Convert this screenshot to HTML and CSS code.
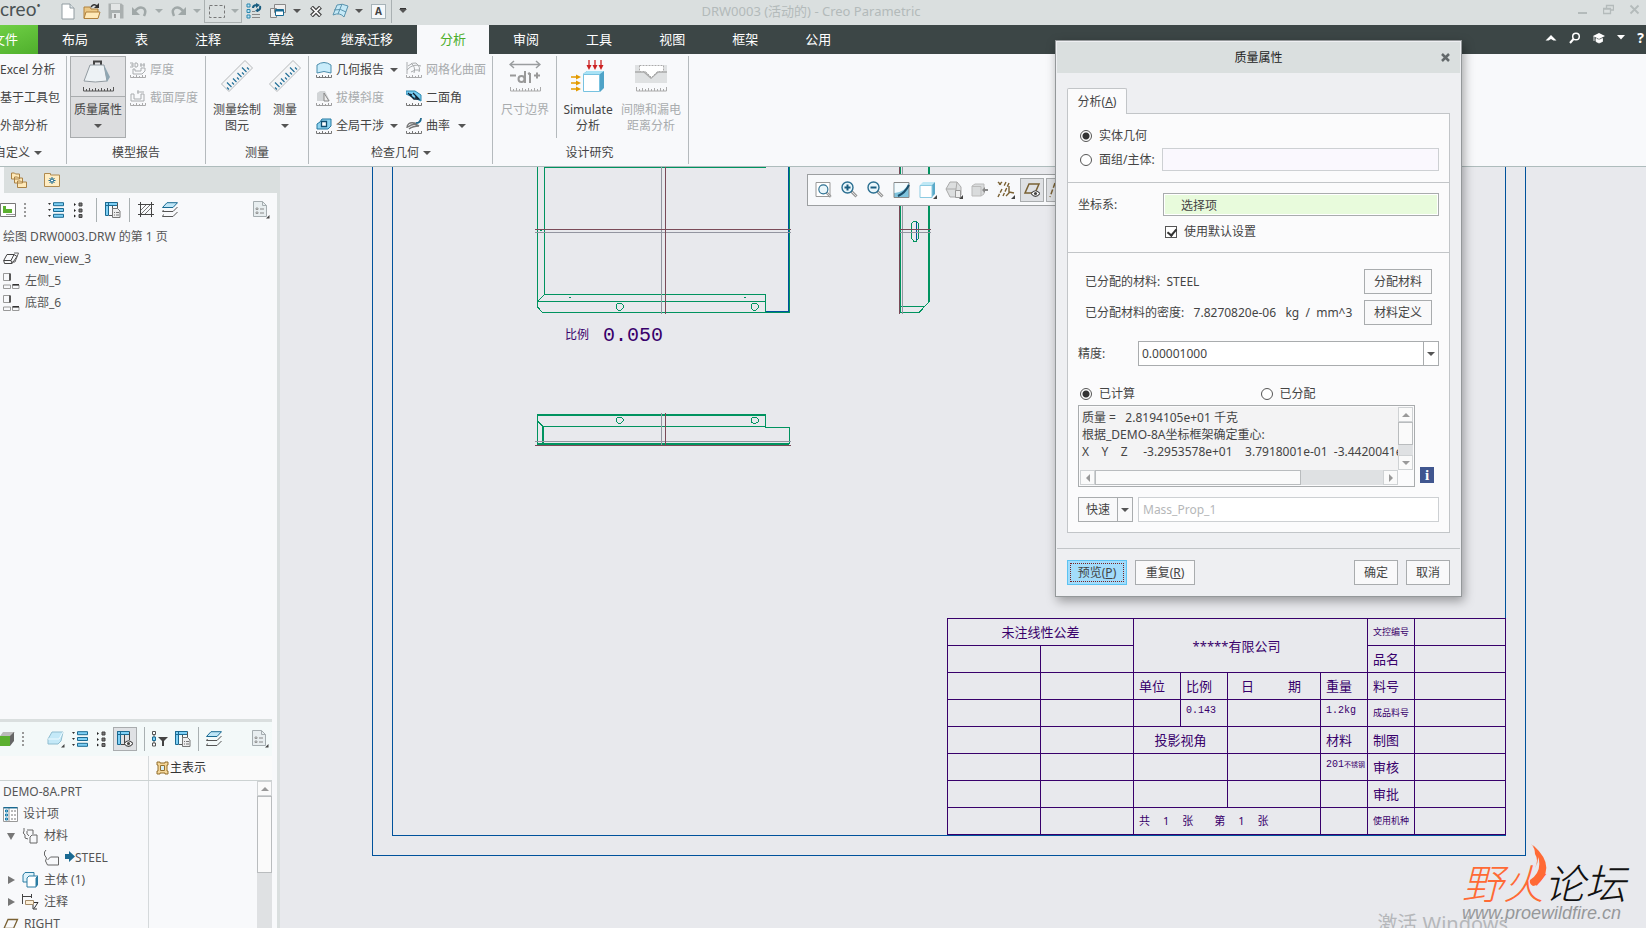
FILE: index.html
```html
<!DOCTYPE html>
<html lang="zh-CN">
<head>
  <meta charset="UTF-8" />
  <meta name="viewport" content="width=device-width, initial-scale=1.0" />
  <title>DRW0003 (活动的) - Creo Parametric</title>
  <link rel="stylesheet" href="styles.css">
</head>
<body>

<!-- shared icons -->
<svg class="defs" width="0" height="0" aria-hidden="true">
  <symbol id="ticks" viewBox="0 0 16 4"><path d="M.5 1v2.500h15V1M3.500 2v1M6.500 1v2M9.500 2v1M12.500 1v2" fill="none" stroke="#777" /></symbol>
  <symbol id="i-rows" viewBox="0 0 16 16"><path d="M5.500.7h10v3h-10zM5.500 6.500h10v3h-10zM5.500 12.300h10v3h-10z" fill="#7fd0f5" stroke="#1a6a92" /><path d="M0 1h3L1.500 3zM0 7h3L1.500 9zM0 13h3l-1.500 2z" fill="#333" /></symbol>
  <symbol id="i-nodes" viewBox="0 0 9 16"><path d="M5 1h3v3H5zM5 7h3v3H5zM5 12.500h3v3H5z" fill="#777" stroke="#444" /><path d="M0 1l2 1.500L0 4zM0 7l2 1.500L0 10zM0 12.500l2 1.500-2 1.500z" fill="#222" /></symbol>
  <symbol id="i-cols" viewBox="0 0 16 16"><path d="M.5.500h3v13h-3zM.5.500h12v3H.5z" fill="#7fd0f5" stroke="#1a6a92" /><path d="M7.500 4v8M12.500 1v6M4 13.500h3" stroke="#555" fill="none" /><path d="M7.500 6.500h5l2.500 2.500v6.500H7.500z" fill="#eee" stroke="#777" /><path d="M9 10.500h1m1 0h3M9 13h1m1 0h3" stroke="#777" /></symbol>
  <symbol id="i-layers" viewBox="0 0 16 16"><path d="M5 .7h10.500L11 5.500H.5z" fill="#bfe6f7" stroke="#1a6a92" /><path d="M1.500 8L.5 9.500H11L15.500 5M1.500 12.500L.5 14.500H11l4.500-4.500" fill="none" stroke="#555" /></symbol>
  <symbol id="i-doc" viewBox="0 0 18 18"><path d="M1.500.5h9l4 4v11h-13z" fill="#e8eef0" stroke="#a5adb0" /><path d="M10.500.5v4h4" fill="none" stroke="#a5adb0" /><path d="M4 7h2v1.500H4zM4 11h2v1.500H4z" fill="none" stroke="#888" stroke-width=".8" /><path d="M8 8h4M8 12h4" stroke="#888" /><path d="M17.500 14v3.500H14z" fill="#444" /></symbol>
  <symbol id="i-view" viewBox="0 0 17 16"><path d="M.5.500h6.500v7H.5zM.5 12h7v3.500h-7zM9.500 12h6.500v3.500H9.500z" fill="none" stroke="#999" /><path d="M7 .5v7M9.500 11.800H16" stroke="#333" stroke-width="1.500" /></symbol>
  <symbol id="i-ruler" viewBox="0 0 32 32"><path d="M24 .5L31.500 8 8 31.500.5 24z" fill="#f4f5f6" stroke="#b5b8ba" /><path d="M8 29.500l-2-2M10.500 27L6 22.500M13 24.500l-2-2M15.500 22L12 18.500M18 19.500l-2-2M20.500 17l-4-4M23 14.500l-2-2M25.500 12L21 7.500M28 9.500l-2-2" stroke="#247099" stroke-width="1.200" /></symbol>
  <symbol id="i-eye" viewBox="0 0 8 6"><path d="M0 3q4-5 8 0-4 5-8 0z" fill="#fff" stroke="#444" /><circle cx="4" cy="3" r="1.400" fill="#444" /></symbol>
  <symbol id="i-lens" viewBox="0 0 17 17"><path d="M10.500 10.500l5 5" stroke="#999" stroke-width="3" /><path d="M10.500 10.500l4.500 4.500" stroke="#ddd" /><circle cx="6.500" cy="6.500" r="5.500" fill="#eaf6fb" stroke="#2b6f91" stroke-width="1.400" /></symbol>
</svg>

<header class="titlebar">
  <div class="quick">
    <span class="brand">creo<sup>•</sup></span>
    <button aria-label="新建"><svg width="14" height="17" viewBox="0 0 14 17"><path d="M1 1h8l4 4v11H1z" fill="#fff" stroke="#909ba0" /><path d="M9 1v4h4" fill="#dde5e8" stroke="#909ba0" /></svg></button>
    <button aria-label="打开"><svg width="18" height="17" viewBox="0 0 18 17"><path d="M1 4h6l1 2h7v9H1z" fill="#eac785" stroke="#b0813d" /><path d="M3 9h14l-2 6.500H1z" fill="#ffe9b8" stroke="#b0813d" /><path d="M8 4q3-4 6-1" fill="none" stroke="#333" stroke-width="1.500" /><path d="M16 0v5h-5z" fill="#333" /></svg></button>
    <button aria-label="保存"><svg width="16" height="16" viewBox="0 0 16 16"><path d="M.5.500h13l2 2v13H.5z" fill="#aab0b0" /><path d="M3 1h9v6H3z" fill="#e3e6e6" /><path d="M4 10h8v6H4z" fill="#e3e6e6" /><path d="M6 11h2v4H6z" fill="#999" /></svg></button>
    <button aria-label="撤消"><svg width="16" height="14" viewBox="0 0 16 14"><path d="M3 7q4-5 8-3t1 8" fill="none" stroke="#a0a8a8" stroke-width="2.500" /><path d="M0 3v8h8z" fill="#a0a8a8" /></svg></button>
    <i class="caret pale"></i>
    <button aria-label="重做"><svg width="16" height="14" viewBox="0 0 16 14"><path d="M13 7q-4-5-8-3T4 12" fill="none" stroke="#a0a8a8" stroke-width="2.500" /><path d="M16 3v8H8z" fill="#a0a8a8" /></svg></button>
    <i class="caret pale"></i>
    <span class="selectbox">
      <button aria-label="选择"><svg width="16" height="13" viewBox="0 0 16 13"><path d="M.5.500h15v12H.5z" fill="none" stroke="#777" stroke-dasharray="3 2" /></svg></button>
      <i class="caret pale"></i>
    </span>
    <button aria-label="重新生成"><svg width="16" height="16" viewBox="0 0 16 16"><path d="M1 1h3v3H1zM1 6.500h3v3H1zM1 12h3v3H1z" fill="#bde5f6" stroke="#2b86ad" /><path d="M6 8.500h3M6 11.500h8M6 14.500h8" stroke="#888" /><path d="M7 5q0-3 4-3M14 3q1 4-3 5" fill="none" stroke="#1a5d80" stroke-width="2" /><path d="M10 0l4 2-4 3zM12 5v4l-3-1z" fill="#1a5d80" /></svg></button>
    <button aria-label="窗口"><svg width="16" height="15" viewBox="0 0 16 15"><path d="M4.500.5h11v8h-11zM.5 4.500h6v9h-6z" fill="#eee" stroke="#888" /><path d="M5.500 5.500h8v6h-8z" fill="#fff" stroke="#1a6a92" /><path d="M5.500 6.500h8" stroke="#1a6a92" stroke-width="2" /></svg></button>
    <i class="caret"></i>
    <button aria-label="关闭窗口"><svg width="12" height="11" viewBox="0 0 12 11"><path d="M1.500 1l9 9M10.500 1l-9 9" stroke="#444" stroke-width="4" /><path d="M2 1.500l8 8M10 1.500l-8 8" stroke="#fff" stroke-width="1.700" /></svg></button>
    <button aria-label="样式"><svg width="17" height="16" viewBox="0 0 17 16"><path d="M5 2q5-2 11 1l-4 11Q8 9 1 12z" fill="#c5e9f7" stroke="#5a93ad" /><path d="M10 1L6 11M2 7q7-2 12 2" fill="none" stroke="#5a93ad" /></svg></button>
    <i class="caret"></i>
    <button class="abox" aria-label="文本">A</button>
    <i class="bar"></i>
    <i class="caret topped"></i>
  </div>
  <div class="apptitle">DRW0003 (活动的) - Creo Parametric</div>
  <div class="winbtns">
    <button aria-label="最小化"><svg width="11" height="11" viewBox="0 0 11 11"><path d="M1 9h9" stroke="#b4bbbb" stroke-width="2" /></svg></button>
    <button aria-label="还原"><svg width="11" height="11" viewBox="0 0 11 11"><path d="M3.500 4V1.500h7V6H8M.5 4.500h7v5h-7zM.5 5h7" fill="none" stroke="#b4bbbb" stroke-width="1.300" /></svg></button>
    <button aria-label="关闭"><svg width="11" height="11" viewBox="0 0 11 11"><path d="M1.500 1.500l8 8M9.500 1.500l-8 8" stroke="#b4bbbb" stroke-width="1.800" /></svg></button>
  </div>
</header>

<nav class="menu">
  <a class="file" href="#">文件</a>
  <a href="#">布局</a>
  <a href="#">表</a>
  <a href="#">注释</a>
  <a href="#">草绘</a>
  <a href="#">继承迁移</a>
  <a class="active" href="#">分析</a>
  <a href="#">审阅</a>
  <a href="#">工具</a>
  <a href="#">视图</a>
  <a href="#">框架</a>
  <a href="#">公用</a>
  <div class="menutools">
    <svg width="12" height="8" viewBox="0 0 12 8"><path d="M6 1l5.500 5.500h-3L6 5 3.500 6.500h-3z" fill="#fff" /></svg>
    <svg width="12" height="12" viewBox="0 0 12 12"><circle cx="7" cy="4.500" r="3.300" fill="none" stroke="#fff" stroke-width="1.500" /><path d="M4.500 7L1 11" stroke="#fff" stroke-width="2" /></svg>
    <svg width="12" height="12" viewBox="0 0 12 12"><path d="M6 1l6 3-6 3-6-3z" fill="#fff" /><path d="M3 6.500l3 1.500 3.500-1.500v3L6 11 3 9.500zM1 4v5" fill="#fff" stroke="#fff" stroke-width=".8" /></svg>
    <svg width="8" height="5" viewBox="0 0 8 5"><path d="M0 0h8L4 4.500z" fill="#fff" /></svg>
    <b>?</b>
  </div>
</nav>

<section class="ribbon">
  <div class="group custom">
    <div class="body stack">
      <button class="small">Excel 分析</button>
      <button class="small">基于工具包</button>
      <button class="small">外部分析</button>
    </div>
    <div class="name">自定义<i class="caret"></i></div>
  </div>

  <div class="group model">
    <div class="body">
      <button class="big pressed">
        <svg width="32" height="32" viewBox="0 0 32 32"><path d="M12 5V1.500h7V5" fill="none" stroke="#444" stroke-width="2" /><path d="M8 5h14l3 16q-12 2-23 0z" fill="#edf2f5" stroke="#929ba1" /><path d="M22 5l6 12-3 5z" fill="#8fa7b3" /><path d="M1.500 27v4h30v-4M4.500 29v2M7.500 28v3M10.500 29v2M13.500 28v3M16.500 29v2M19.500 28v3M22.500 29v2M25.500 28v3M28.500 29v2" fill="none" stroke="#555" /></svg>
        <span>质量属性</span>
        <i class="caret"></i>
      </button>
      <div class="stack">
        <button class="small" disabled><svg width="16" height="16" viewBox="0 0 16 16"><path d="M0 1h3v4H0M1 3h2M5 1h2l1 2-1 2H5zM10 3h5M11 1v4M14 1v4M3 7h2v2h6V6h4v3l-3 3H3z" fill="none" stroke="#a9acae" /><use href="#ticks" y="12" width="16" height="4" opacity=".6" /></svg>厚度</button>
        <button class="small" disabled><svg width="16" height="16" viewBox="0 0 16 16"><path d="M1 4h3v5h7V4h3v7H1zM7 2h7M8 0v4" fill="none" stroke="#a9acae" /><use href="#ticks" y="12" width="16" height="4" opacity=".6" /></svg>截面厚度</button>
      </div>
    </div>
    <div class="name">模型报告</div>
  </div>

  <div class="group">
    <div class="body">
      <button class="big"><svg width="32" height="32"><use href="#i-ruler" /></svg><span>测量绘制<br>图元</span></button>
      <button class="big slim"><svg width="32" height="32"><use href="#i-ruler" /></svg><span>测量</span><i class="caret"></i></button>
    </div>
    <div class="name">测量</div>
  </div>

  <div class="group check">
    <div class="body">
      <div class="stack first">
        <button class="small"><svg width="16" height="16" viewBox="0 0 16 16"><path d="M1 11V3q7-5 14 0v8q-7-3-14 0z" fill="#c9ecfb" stroke="#4b8dac" /><use href="#ticks" y="12" width="16" height="4" /></svg>几何报告<i class="caret"></i></button>
        <button class="small" disabled><svg width="16" height="16" viewBox="0 0 16 16"><path d="M1 11V3l3-2h5l5 10z" fill="#d2d5d7" /><path d="M8 3l5 8H8z" fill="#eee" stroke="#888" /><use href="#ticks" y="12" width="16" height="4" opacity=".7" /></svg>拔模斜度</button>
        <button class="small"><svg width="16" height="16" viewBox="0 0 16 16"><path d="M6 1h9v7l-3 3H1V6l3-2z" fill="#8ed3ef" stroke="#2579a1" /><path d="M5.500 3.500h5v5h-5z" fill="#fff" stroke="#0f4d70" stroke-width="1.300" /><use href="#ticks" y="12" width="16" height="4" /></svg>全局干涉<i class="caret"></i></button>
      </div>
      <div class="stack">
        <button class="small" disabled><svg width="16" height="16" viewBox="0 0 16 16"><path d="M1 0v12M1 8q6-7 14-4M2 4q5-4 8-3M5 1q5 4 3 10M10 1q5 4 3 9M5 10q4-3 9-2" fill="none" stroke="#a9acae" /><use href="#ticks" y="12" width="16" height="4" opacity=".6" /></svg>网格化曲面</button>
        <button class="small"><svg width="16" height="16" viewBox="0 0 16 16"><path d="M0 1h9l6 4v6L0 4z" fill="#77cdf2" stroke="#2b86ad" /><path d="M2 3l6 6h5L7 3M4 4l2 1M9 7l3 1" fill="none" stroke="#123" stroke-width="1.300" /><use href="#ticks" y="12" width="16" height="4" /></svg>二面角</button>
        <button class="small"><svg width="16" height="16" viewBox="0 0 16 16"><path d="M1 10Q1 4 8 5q6 1 7-5M2 9q6-5 11-1M3 11q4-3 10-3" fill="none" stroke="#777" stroke-width="1.500" /><path d="M10 5q5 0 5-5" fill="none" stroke="#1a6a92" stroke-width="1.500" /><use href="#ticks" y="12" width="16" height="4" /></svg>曲率<i class="caret"></i></button>
      </div>
    </div>
    <div class="name">检查几何<i class="caret"></i></div>
  </div>

  <div class="group study">
    <div class="body">
      <button class="big wide" disabled><svg width="32" height="32" viewBox="0 0 32 32"><path d="M1 4.500h30M5 1L1 4.500 5 8M27 1l4 3.500L27 8" fill="none" stroke="#9a9d9f" stroke-width="1.500" /><path d="M1 15.500h6M25 15.500h6M28 12.500v6M16 11v12M21 13v10M19 14l2-1" fill="none" stroke="#999" stroke-width="2" /><circle cx="12.500" cy="19" r="3" fill="none" stroke="#999" stroke-width="2" /><path d="M1.500 27v4h30v-4M4.500 29v2M7.500 28v3M10.500 29v2M13.500 28v3M16.500 29v2M19.500 28v3M22.500 29v2M25.500 28v3M28.500 29v2" fill="none" stroke="#aaa" /></svg><span>尺寸边界</span></button>
      <i class="divide"></i>
      <button class="big wide"><svg width="34" height="32" viewBox="0 0 34 32"><path d="M12 14l4-3h17v17l-4 4z" fill="#4fa3c7" /><path d="M12 14l4-3h17l-4 3z" fill="#a8e2f5" /><path d="M12.500 14.500h16v17h-16z" fill="#fff" stroke="#77c2e0" /><path d="M18 0v8M24 0v8M30 0v8" stroke="#c22" stroke-width="1.300" /><path d="M15.500 5h5L18 10zM21.500 5h5L24 10zM27.500 5h5L30 10z" fill="#c22" /><path d="M0 17h7M0 23h7M0 29h7" stroke="#e39b00" stroke-width="1.300" /><path d="M5 14.500v5l5-2.500zM5 20.500v5l5-2.500zM5 26.500v5l5-2.500z" fill="#e39b00" /></svg><span>Simulate<br>分析</span></button>
      <button class="big widest" disabled><svg width="32" height="32" viewBox="0 0 32 32"><path d="M0 5h4v6h6l6 6 6-6h6V5h4v18H0z" fill="#dfe1e2" /><path d="M0 12h9l7 6 7-6h9" fill="none" stroke="#aaa" stroke-width="1.500" /><path d="M4.500 5.500h24v6h-6l-6 6-6-6h-6z" fill="#fff" stroke="#aaa" stroke-dasharray="2 1" /><path d="M1.500 27v4h30v-4M4.500 29v2M7.500 28v3M10.500 29v2M13.500 28v3M16.500 29v2M19.500 28v3M22.500 29v2M25.500 28v3M28.500 29v2" fill="none" stroke="#aaa" /></svg><span>间隙和漏电<br>距离分析</span></button>
    </div>
    <div class="name">设计研究</div>
  </div>
</section>

<main class="work">
  <aside class="side">
    <div class="sidetabs">
      <svg width="16" height="16" viewBox="0 0 16 16"><path d="M.5 1h3l1 1h4v5h-8zM3.500 5h3l1 1h4v5h-8zM6.500 9h3l1 1h5v5.500h-9z" fill="#ffe9b8" stroke="#a98145" /></svg>
      <svg width="16" height="16" viewBox="0 0 16 16"><path d="M.5 3V1.500h6V3h9v11.500H.5z" fill="#ffedc4" stroke="#b08a4e" /><path d="M8 5v7M4.500 8.500h7M5.500 6l5 5M10.500 6l-5 5" stroke="#1a6a92" /><circle cx="8" cy="8.500" r="1.500" fill="#fff" stroke="#1a6a92" /></svg>
    </div>

    <div class="pane upper">
      <div class="tools">
        <svg width="16" height="14" viewBox="0 0 16 14"><path d="M.5.500h15v13H.5z" fill="#fff" stroke="#777" /><path d="M3 3h3v3h6v4H3z" fill="#5bb030" /><path d="M6 11.500h9" stroke="#999" /></svg>
        <i class="dots"></i>
        <svg class="sp2" width="16" height="16"><use href="#i-rows" /></svg>
        <svg class="sp1" width="9" height="16"><use href="#i-nodes" /></svg>
        <i class="bar sp3"></i>
        <svg width="16" height="16"><use href="#i-cols" /></svg>
        <i class="bar"></i>
        <svg width="16" height="16" viewBox="0 0 16 16"><path d="M0 2.500h16M0 12.500h16M2.500 0v15M13.500 0v15" stroke="#444" fill="none" /><path d="M3 8l5-5M3 12l9-9M7 12l6-6" stroke="#777" /></svg>
        <svg width="16" height="16"><use href="#i-layers" /></svg>
        <svg class="last" width="18" height="18"><use href="#i-doc" /></svg>
      </div>
      <ul class="tree">
        <li>绘图 DRW0003.DRW 的第 1 页</li>
        <li><svg width="17" height="14" viewBox="0 0 17 14"><path d="M4 2.500h7L8 8.500H.7L4 2.500zM.7 8.500l.8 3H9l5-7L11 2.500M8 8.500l1 3" fill="none" stroke="#444" /><path d="M11 1h4.500L12 10H8" fill="none" stroke="#666" /></svg>new_view_3</li>
        <li><svg width="17" height="16"><use href="#i-view" /></svg>左侧_5</li>
        <li><svg width="17" height="16"><use href="#i-view" /></svg>底部_6</li>
      </ul>
    </div>

    <div class="pane lower">
      <div class="tools">
        <svg width="15" height="14" viewBox="0 0 15 14"><path d="M0 4l3-4h12l-4 4z" fill="#bbb" /><path d="M10 4l4-4v9l-4 5z" fill="#666" /><path d="M0 4h10v10H0z" fill="#5bb030" /></svg>
        <i class="dots"></i>
        <svg class="sp2" width="18" height="18" viewBox="0 0 18 18"><path d="M1 9l4-7h11l-2 9-3 3H1z" fill="#c4e9f8" stroke="#8fbdd0" /><path d="M1 9h11l4-7" fill="none" stroke="#eefaff" /><path d="M17.500 14v3.500H14z" fill="#444" /></svg>
        <svg width="16" height="16"><use href="#i-rows" /></svg>
        <svg class="sp1" width="9" height="16"><use href="#i-nodes" /></svg>
        <button class="on" aria-label="树列"><svg width="16" height="16" viewBox="0 0 16 16"><path d="M.5.500h3v13h-3zM.5.500h12v3H.5z" fill="#7fd0f5" stroke="#1a6a92" /><path d="M7.500 4v9.500M12.500 1v8M4 13.500h4" stroke="#444" fill="none" /><use href="#i-eye" x="7" y="9" width="9" height="7" /></svg></button>
        <i class="bar"></i>
        <svg width="16" height="16" viewBox="0 0 16 16"><path d="M2 4v8" stroke="#555" /><path d="M.5.500h3v3h-3zM.5 12h3v3h-3z" fill="#fff" stroke="#555" /><path d="M.5 6h3v3.500h-3z" fill="#7fd0f5" stroke="#1a6a92" /><path d="M6 6h10l-4 4v5h-2v-5z" fill="#444" /></svg>
        <svg width="16" height="16"><use href="#i-cols" /></svg>
        <i class="bar"></i>
        <svg width="16" height="16"><use href="#i-layers" /></svg>
        <svg class="last" width="18" height="18"><use href="#i-doc" /></svg>
      </div>
      <div class="columns">
        <span></span>
        <span><svg width="13" height="14" viewBox="0 0 13 14"><path d="M1 1h3v1h5V1h3v3h-1v6h1v3H9v-1H4v1H1v-3h1V4H1z" fill="#f5d79a" stroke="#94702f" /><path d="M4.500 4.500h4v5h-4z" fill="#d5effa" stroke="#94702f" /></svg>主表示</span>
      </div>
      <div class="treebox">
        <ul class="tree">
          <li>DEMO-8A.PRT</li>
          <li><svg width="15" height="15" viewBox="0 0 15 15"><path d="M.5.500h14v14H.5zM6 1v13" fill="#fff" stroke="#999" /><path d="M.5.700h14" stroke="#1a6a92" stroke-width="1.500" /><path d="M2.500 3h2v2h-2zM2.500 7h2v2h-2zM2.500 11h2v2h-2z" fill="#9ddcf5" stroke="#1a7aa8" /><path d="M8 4h2m1 0h2M8 8h2m1 0h2M8 12h2m1 0h2" stroke="#777" /></svg>设计项</li>
          <li><i class="open"></i><svg width="17" height="16" viewBox="0 0 17 16"><path d="M2 0v3q-2 2 1 4v3l3 1M5 2h6v4M8 9l2-2h5v8H8z" fill="none" stroke="#666" /><path d="M5 3q-1 3 2 5" fill="none" stroke="#666" /></svg>材料</li>
          <li class="in"><svg width="17" height="16" viewBox="0 0 17 16"><path d="M3 0L1.500 2v3l2 3-1 3 2 4h11V7h-8l-3 3" fill="none" stroke="#666" /></svg><svg class="arrow" width="10" height="11" viewBox="0 0 10 11"><path d="M0 3h4V0l6 5.500L4 11V8H0z" fill="#1a6a92" /></svg>STEEL</li>
          <li><i class="closed"></i><svg width="17" height="16" viewBox="0 0 17 16"><path d="M1 3l2-2.500h9V10H1z" fill="#dff3fb" stroke="#2b7da3" /><path d="M5 6l2-2h9l-2 2v9H5z" fill="#fff" stroke="#2b7da3" /><path d="M14 6l2-2v9l-2 2z" fill="#2b7da3" /></svg>主体 (1)</li>
          <li><i class="closed"></i><svg width="17" height="16" viewBox="0 0 17 16"><path d="M.5 0v10M9.500 0v4M1 2.500h8" fill="none" stroke="#444" /><path d="M3.500 6.500h8v4h-8z" fill="#fdf0d8" stroke="#a58c6a" /><path d="M12 8.500h4l-4 6M11 11v4h4" fill="none" stroke="#333" /></svg>注释</li>
          <li><svg width="16" height="12" viewBox="0 0 16 12"><path d="M5 1.500h9.500l-4 9H1z" fill="none" stroke="#7a6133" stroke-width="1.300" /></svg>RIGHT</li>
        </ul>
        <div class="scroll"><i class="up"></i><b></b></div>
      </div>
    </div>
  </aside>

  <section class="canvas">
    <svg class="drawing" width="1260" height="700" viewBox="280 167 1260 700" fill="none" shape-rendering="crispEdges">
      <!-- sheet frames -->
      <g stroke="#00529c"><path d="M372.500 167v688.500h1153V167M392.500 167v668.500h1113V167" /></g>
      <!-- front view -->
      <g stroke="#00935f">
        <path d="M544 167.500h222M544.500 167v127.500l-7 7M537.500 167v140l5 5.500H789.500V167M544.500 294.500h221v18M537 301.500h229" />
        <path d="M616 305l2-2h3l2 2v3l-2 2h-3l-2-2zM751 305l2-2h3l2 2v3l-2 2h-3l-2-2zM569 297.500h2M744 297.500h2M540 230.500h2" />
      </g>
      <path d="M788.500 167v144.500H766" stroke="#00529c" />
      <path d="M661.500 167v147M535 232.500h256" stroke="#9395a0" />
      <path d="M665.500 167v147M535 229.500h256" stroke="#7a4a58" />
      <!-- side view -->
      <path d="M900.500 167v145.500h18.500l10-10.500M901 306.500h24" stroke="#00935f" />
      <path d="M929 167v135" stroke="#00935f" stroke-width="2" />
      <path d="M911.500 224l2-3h3l2 3v14l-2 3h-3l-2-3z" stroke="#00935f" />
      <path d="M916.500 222v18" stroke="#00529c" />
      <path d="M902.500 167v147M899 232.500h32" stroke="#9395a0" />
      <path d="M899.500 167v147M899 229.500h32" stroke="#7a4a58" />
      <!-- bottom view -->
      <path d="M537 415h229M537 444h252M543 426v18" stroke="#00935f" stroke-width="2" />
      <path d="M537.500 415v29M537.500 421l5 5h223M765.500 415v12.500h24V444M616 419l2-2h3l2 2v2l-2 2h-3l-2-2zM751 419l2-2h3l2 2v3l-2 1h-3l-2-1z" stroke="#00935f" />
      <path d="M661.500 413v33M535 441.500h256" stroke="#9395a0" />
      <path d="M665.500 413v33M535 445.500h256" stroke="#7a4a58" />
      <text class="note" x="565" y="339">比例</text>
      <text class="scale" x="603" y="341">0.050</text>
    </svg>

    <table class="block">
      <colgroup><col class="w2"><col class="w2"><col class="w1"><col class="w1"><col class="w2"><col class="w1"><col class="w1"><col></colgroup>
      <tr><td colspan="2" class="mid">未注线性公差</td><td colspan="4" rowspan="2" class="mid company">*****有限公司</td><td class="tiny">文控编号</td><td></td></tr>
      <tr><td></td><td></td><td>品名</td><td></td></tr>
      <tr><td></td><td></td><td>单位</td><td>比例</td><td class="spread"><span>日</span><span>期</span></td><td>重量</td><td>料号</td><td></td></tr>
      <tr><td></td><td></td><td></td><td class="num">0.143</td><td></td><td class="num">1.2kg</td><td class="tiny">成品料号</td><td></td></tr>
      <tr><td></td><td></td><td colspan="2" class="mid">投影视角</td><td></td><td>材料</td><td>制图</td><td></td></tr>
      <tr><td></td><td></td><td colspan="2"></td><td></td><td class="num">201<small>不锈钢</small></td><td>审核</td><td></td></tr>
      <tr><td></td><td></td><td colspan="2"></td><td></td><td></td><td>审批</td><td></td></tr>
      <tr><td></td><td></td><td colspan="3"><div class="pages"><span>共</span><span>1</span><span>张</span><span class="gap">第</span><span>1</span><span>张</span></div></td><td></td><td class="tiny">使用机种</td><td></td></tr>
    </table>

    <div class="viewbar">
      <button aria-label="重新调整"><svg width="18" height="18" viewBox="0 0 18 18"><path d="M1 1.500h14v14H1z" fill="#fff" stroke="#999" /><use href="#i-lens" x="3" y="3" width="14" height="14" /></svg></button>
      <button aria-label="放大"><svg width="18" height="18" viewBox="0 0 18 18"><use href="#i-lens" width="17" height="17" /><path d="M3.500 6.500h6M6.500 3.500v6" stroke="#1a5d80" stroke-width="2" /></svg></button>
      <button aria-label="缩小"><svg width="18" height="18" viewBox="0 0 18 18"><use href="#i-lens" width="17" height="17" /><path d="M3.500 6.500h6" stroke="#1a5d80" stroke-width="2" /></svg></button>
      <button aria-label="重画"><svg width="18" height="18" viewBox="0 0 18 18"><path d="M1 1.500h15v15H1z" fill="#7fc3dd" stroke="#888" /><path d="M1.500 2h14q-3 9-14 10z" fill="#f3fafd" /><path d="M5 15q7-3 11-11" fill="none" stroke="#1a4d6a" stroke-width="2" /></svg></button>
      <button aria-label="显示样式"><svg width="18" height="18" viewBox="0 0 18 18"><path d="M1 4l3-3h12l-3 3z" fill="#bfe8f5" /><path d="M13 4l3-3v12l-3 3z" fill="#5aa9c9" /><path d="M1 4.500h12v12H1z" fill="#fff" stroke="#8ccbe2" /><path d="M18 14v4h-4z" fill="#444" /></svg></button>
      <button aria-label="视图方向"><svg width="18" height="18" viewBox="0 0 18 18"><path d="M1 8l4-7h7l4 5v8l-5 2H5z" fill="#dcdedf" stroke="#aaa" /><path d="M1 8h10l1-7M11 8v7" fill="none" stroke="#aaa" /><path d="M10.500 9.500h5v7h-5z" fill="#eee" stroke="#999" /><path d="M18 14v4h-4z" fill="#444" /></svg></button>
      <button aria-label="透视图"><svg width="18" height="18" viewBox="0 0 18 18"><path d="M1 5l3-2h9v10l-3 2H1z" fill="#d9dbdc" stroke="#bbb" /><path d="M1 5.500h9V15" fill="none" stroke="#bbb" /><path d="M11 9l3-3v2h3v2h-3v2z" fill="#888" /></svg></button>
      <button aria-label="基准显示"><svg width="18" height="18" viewBox="0 0 18 18"><path d="M1 1l4 4M5 1L1 5M9 1L7 5M5 8l-4 8M12 2L6 15" stroke="#7a6133" stroke-width="1.400" stroke-dasharray="4 1.500" /><path d="M12 5v7l-3 3M12 11l5 1" fill="none" stroke="#7a6133" stroke-width="1.400" /><path d="M18 14v4h-4z" fill="#444" /></svg></button>
      <button class="on" aria-label="平面显示"><svg width="18" height="18" viewBox="0 0 18 18"><path d="M6 3h10l-4 9H2z" fill="none" stroke="#7a6133" stroke-width="1.500" /><use href="#i-eye" x="8" y="9" width="9" height="7" /></svg></button>
      <button class="on" aria-label="轴显示"><svg width="18" height="18" viewBox="0 0 18 18"><path d="M6 2L1 16" stroke="#7a6133" stroke-width="1.500" stroke-dasharray="5 2" /></svg></button>
    </div>

    <div class="watermark">
      <div class="logo"><span>野火</span>论坛
        <svg width="20" height="44" viewBox="0 0 20 44"><path d="M4 1q12 10 4 24 4-8 0-14 0-6-4-10zM6 2q20 18 10 33-6 8-10 8-4-2-3-6Q20 26 6 2z" fill="#ff6a35" /></svg>
      </div>
      <div class="site">www.proewildfire.cn</div>
    </div>
    <div class="activate">激活 Windows</div>
  </section>
</main>

<form class="dialog" onsubmit="return false">
  <div class="caption">质量属性
    <button type="button" aria-label="关闭"><svg width="9" height="9" viewBox="0 0 9 9"><path d="M1 1l7 7M8 1L1 8" stroke="#63696b" stroke-width="2.500" /></svg></button>
  </div>
  <div class="inner">
    <div class="tab">分析(<u>A</u>)</div>
    <div class="sheet">
      <div class="part geometry">
        <label><input type="radio" name="geom" checked>实体几何</label>
        <div class="line">
          <label><input type="radio" name="geom">面组/主体:</label>
          <input class="quilt" type="text" aria-label="面组/主体">
        </div>
      </div>
      <div class="part csys">
        <div class="line"><label class="lead" for="csys">坐标系:</label><input id="csys" type="text" value="选择项"></div>
        <label class="default"><input type="checkbox" checked>使用默认设置</label>
      </div>
      <div class="part rest">
        <div class="line material"><span>已分配的材料:&nbsp; STEEL</span><button type="button">分配材料</button></div>
        <div class="line material"><span>已分配材料的密度:&nbsp;&nbsp; 7.8270820e-06&nbsp;&nbsp; kg&nbsp; /&nbsp; mm^3</span><button type="button">材料定义</button></div>
        <div class="line accuracy">
          <label for="acc">精度:</label>
          <div class="select"><select id="acc"><option>0.00001000</option></select><i class="caret"></i></div>
        </div>
        <div class="line modes">
          <label><input type="radio" name="mode" checked>已计算</label>
          <label><input type="radio" name="mode">已分配</label>
        </div>
        <div class="line result">
          <div class="output">
            <textarea readonly wrap="off" aria-label="结果">质量 =   2.8194105e+01 千克
根据_DEMO-8A坐标框架确定重心:
X    Y    Z     -3.2953578e+01    3.7918001e-01  -3.4420041e+02</textarea>
            <div class="scroll vert"><i class="up"></i><b></b><i class="down"></i></div>
            <div class="scroll horz"><i class="left"></i><b></b><i class="right"></i></div>
          </div>
          <button type="button" class="info" aria-label="信息">i</button>
        </div>
        <div class="line save">
          <div class="select kind"><select aria-label="类型"><option>快速</option></select><i class="caret"></i></div>
          <input type="text" aria-label="名称" placeholder="Mass_Prop_1">
        </div>
      </div>
    </div>
  </div>
  <div class="actions">
    <button type="button" class="preview"><span>预览(<u>P</u>)</span></button>
    <button type="button">重复(<u>R</u>)</button>
    <button type="button" class="ok">确定</button>
    <button type="button">取消</button>
  </div>
</form>

</body>
</html>
```

FILE: styles.css
```css
* {
  box-sizing: border-box;
}

body {
  margin: 0;
  height: 100vh;
  display: flex;
  flex-direction: column;
  overflow: hidden;
  background: #e8e9ed;
  color: #444;
  font-family: "Noto Sans", "Noto Sans CJK SC", sans-serif;
  font-size: 12px;
  line-height: 16px;
}

button, input, select, textarea {
  font: inherit;
  color: inherit;
  margin: 0;
}

button {
  border: 0;
  padding: 0;
  background: none;
}

svg {
  flex: none;
}

.defs {
  position: absolute;
}

.caret {
  flex: none;
  width: 0;
  height: 0;
  border: 4px solid transparent;
  border-top-color: #555;
  border-bottom: 0;
}

.caret.pale {
  border-top-color: #a5adad;
}

/* title bar */
.titlebar {
  flex: 0 0 25px;
  display: grid;
  grid-template-columns: 1fr auto 1fr;
  background: #dadfdf;
}

.quick {
  display: flex;
  align-items: center;
  height: 22px;
}

.quick button {
  width: 24px;
  height: 20px;
  display: flex;
  align-items: center;
  justify-content: center;
}

.quick .caret {
  margin: 0 3px;
}

.brand {
  width: 56px;
  overflow: hidden;
  font-family: Lato, sans-serif;
  font-size: 19px;
  line-height: 20px;
  padding-bottom: 4px;
  color: #4a5254;
}

.brand sup {
  font-size: 7px;
  line-height: 8px;
  vertical-align: 8px;
}

.selectbox {
  display: flex;
  align-items: center;
  height: 24px;
  border: 1px solid #aab0b0;
}

.selectbox .caret {
  margin: 0 2px;
}

.quick .abox {
  width: 15px;
  height: 15px;
  margin: 0 5px;
  border: 1px solid #a7b3b8;
  background: #f5f8fa;
  font-size: 10px;
  font-weight: bold;
  line-height: 12px;
}

.bar {
  width: 1px;
  height: 24px;
  background: #a9b0b2;
}

.quick .topped {
  margin-left: 7px;
  box-shadow: 0 -2px 0 -1px #333;
}

.apptitle {
  margin-right: 24px;
  line-height: 22px;
  font-size: 13px;
  color: #b3baba;
}

.winbtns {
  display: flex;
  justify-content: flex-end;
  align-items: center;
  height: 22px;
  gap: 15px;
  padding-right: 6px;
}

/* tabs */
.menu {
  flex: 0 0 29px;
  display: flex;
  gap: 1px;
  background: #3c4646;
}

.menu a {
  padding: 0 23px;
  color: #fff;
  font-size: 13px;
  line-height: 29px;
  text-decoration: none;
  white-space: nowrap;
}

.menu .file {
  width: 38px;
  padding: 0 20px 0 0;
  display: flex;
  justify-content: flex-end;
  overflow: hidden;
  background: linear-gradient(160deg, #6fcf45, #4faf2c);
}

.menu .active {
  background: #f8f9fb;
  color: #4cae2b;
}

.menutools {
  display: flex;
  align-items: center;
  gap: 12px;
  height: 25px;
  margin-left: auto;
  padding-right: 2px;
  color: #fff;
}

.menutools b {
  font-size: 14px;
}

/* ribbon */
.ribbon {
  flex: 0 0 113px;
  display: flex;
  padding: 2px 0;
  background: #f8f9fb;
  border-bottom: 1px solid #aebcbc;
}

.group {
  display: flex;
  flex-direction: column;
  padding: 0 3px;
  border-right: 1px solid #b5babd;
}

.body {
  display: flex;
  flex: 1;
}

.name {
  display: flex;
  align-items: center;
  justify-content: center;
  gap: 4px;
  height: 22px;
  white-space: nowrap;
}

.custom {
  width: 67px;
  padding: 0;
  overflow: hidden;
}

.custom .name {
  justify-content: flex-end;
  padding-right: 24px;
}

.stack {
  display: flex;
  flex-direction: column;
}

.small {
  display: flex;
  align-items: center;
  gap: 4px;
  height: 28px;
  white-space: nowrap;
}

.custom .small {
  gap: 0;
}

.small .caret {
  margin-left: auto;
}

.ribbon button:disabled {
  color: #a9acae;
}

.big {
  width: 56px;
  height: 82px;
  display: flex;
  flex-direction: column;
  align-items: center;
  padding-top: 4px;
}

.big span {
  margin-top: 10px;
}

.big .caret {
  margin-top: 6px;
}

.big.slim {
  width: 40px;
}

.big.wide {
  width: 60px;
}

.big.widest {
  width: 66px;
}

.pressed {
  padding-top: 3px;
  border: 1px solid #a9acae;
  background: linear-gradient(#e1e2e4 39px, #a9acae 39px, #a9acae 40px, #dcdddf 40px);
}

.model .stack {
  margin-left: 4px;
}

.model .small {
  padding-right: 4px;
}

.check {
  padding: 0 6px 0 7px;
}

.check .first {
  width: 90px;
}

.check .first .small {
  padding-right: 8px;
}

.check .stack:last-child .caret {
  margin-left: 4px;
}

.study {
  padding: 0 4px 0 2px;
}

.divide {
  width: 1px;
  margin: 0 1px 4px;
  background: #b5babd;
}

/* left side */
.work {
  flex: 1;
  display: flex;
  min-height: 0;
}

.side {
  flex: 0 0 280px;
  display: flex;
  flex-direction: column;
  padding-right: 3px;
  background: #dadfdf;
}

.sidetabs {
  display: flex;
  align-items: center;
  gap: 17px;
  height: 26px;
  padding-left: 7px;
  border-left: 4px solid #f8f9fb;
}

.pane {
  background: #f8f9fb;
  overflow: hidden;
}

.upper {
  flex: 1;
}

.lower {
  flex: 0 0 209px;
  display: flex;
  flex-direction: column;
  padding-right: 5px;
}

.lower::before {
  content: "";
  height: 3px;
  background: #dadfdf;
}

.tools {
  display: flex;
  align-items: center;
  gap: 8px;
  height: 33px;
  background: #f3f9f9;
}

.upper .tools {
  padding-right: 7px;
  background: #f8f9fb;
}

.tools .bar {
  height: 24px;
}

.tools .last {
  margin-left: auto;
}

.tools .sp1 {
  margin-left: 2px;
}

.tools .sp2 {
  margin-left: 14px;
}

.tools .sp3 {
  margin-left: 5px;
}

.dots {
  width: 2px;
  height: 14px;
  background: repeating-linear-gradient(#999 0 2px, transparent 2px 4px);
}

.lower .tools {
  gap: 7px;
  height: 34px;
  padding-right: 3px;
}

.lower .tools .sp2 {
  margin-left: 16px;
}

.on {
  display: flex;
  align-items: center;
  justify-content: center;
  width: 24px;
  height: 24px;
  border: 1px solid #a9acae;
  background: #dfe1e4;
}

.tree {
  margin: 0;
  padding: 0 0 0 3px;
  list-style: none;
}

.tree li {
  display: flex;
  align-items: center;
  gap: 5px;
  height: 22px;
  color: #555;
  white-space: nowrap;
}

.columns {
  display: flex;
  flex: 0 0 25px;
  background: #fafafa;
  border-bottom: 1px solid #ccd2d2;
}

.columns span {
  display: flex;
  align-items: center;
  gap: 1px;
  padding-left: 7px;
  color: #333;
}

.columns span:first-child,
.lower .tree {
  flex: 0 0 149px;
  border-right: 1px solid #d5d9db;
}

.treebox {
  flex: 1;
  display: flex;
  min-height: 0;
}

.lower .tree .in {
  padding-left: 40px;
}

.tree .arrow {
  margin: 0 -5px 4px 0;
}

.open, .closed {
  width: 0;
  height: 0;
  margin: 0 2px 0 4px;
  border: 4px solid transparent;
  border-top: 7px solid #777;
  border-bottom: 0;
}

.closed {
  margin-left: 5px;
  border: 4px solid transparent;
  border-left: 7px solid #777;
  border-right: 0;
}

.scroll {
  display: flex;
  background: #dfe1e3;
}

.scroll b {
  background: #fafafa;
  border: 1px solid #b9bcbe;
}

.scroll i {
  display: flex;
  align-items: center;
  justify-content: center;
  width: 15px;
  height: 15px;
  border: 1px solid #cfd2d4;
  background: #fafafa;
}

.scroll i::before {
  content: "";
  border: 4px solid transparent;
}

.scroll .up::before {
  border-top: 0;
  border-bottom-color: #999;
}

.scroll .down::before {
  border-bottom: 0;
  border-top-color: #999;
}

.scroll .left::before {
  border-left: 0;
  border-right-color: #999;
}

.scroll .right::before {
  border-right: 0;
  border-left-color: #999;
}

.treebox .scroll {
  flex-direction: column;
  width: 15px;
  margin-left: auto;
}

.treebox .scroll b {
  height: 77px;
}

/* drawing */
.canvas {
  flex: 1;
  position: relative;
  overflow: hidden;
}

.drawing {
  position: absolute;
  top: 0;
  left: 0;
}

.note, .scale {
  fill: #38006b;
  font-size: 12px;
}

.scale {
  font-family: "Liberation Mono", monospace;
  font-size: 20px;
}

.block {
  position: absolute;
  top: 451px;
  left: 667px;
  width: 559px;
  table-layout: fixed;
  border-collapse: collapse;
  color: #38006b;
  font-size: 13px;
}

.block .w1 {
  width: 47px;
}

.block .w2 {
  width: 93px;
}

.block td {
  height: 27px;
  padding: 0 0 0 5px;
  border: 1px solid #38006b;
  white-space: nowrap;
}

.block .mid {
  padding: 0;
  text-align: center;
}

.block .company {
  padding-right: 28px;
}

.block .tiny {
  font-size: 9px;
}

.block .num {
  padding-top: 4px;
  font-family: "Liberation Mono", "Noto Sans CJK SC", monospace;
  font-size: 10px;
  line-height: 14px;
  vertical-align: top;
}

.block small {
  font-size: 7px;
}

.block .spread span {
  margin: 0 34px 0 8px;
}

.block .spread span + span {
  margin: 0;
}

.pages {
  display: flex;
  gap: 13px;
  font-size: 11px;
}

.pages .gap {
  margin-left: 8px;
}

.viewbar {
  position: absolute;
  top: 7px;
  left: 527px;
  display: flex;
  align-items: center;
  gap: 2px;
  height: 32px;
  padding: 0 4px;
  border: 1px solid #9c9fa1;
  background: #f8f9fb;
}

.viewbar button {
  display: flex;
  align-items: center;
  justify-content: center;
  width: 24px;
  height: 24px;
}

.watermark {
  position: absolute;
  right: 20px;
  bottom: 6px;
}

.logo {
  position: relative;
  color: #111;
  font-size: 41px;
  font-style: italic;
  font-weight: 300;
  line-height: 42px;
}

.logo span {
  color: #ff6a35;
}

.logo svg {
  position: absolute;
  top: -19px;
  left: 65px;
}

.site {
  color: #96989a;
  font-family: "Liberation Sans", sans-serif;
  font-size: 18px;
  font-style: italic;
  line-height: 18px;
}

.activate {
  position: absolute;
  right: 138px;
  bottom: -10px;
  color: #b5b7ba;
  font-size: 20px;
  line-height: 28px;
}

/* dialog */
.dialog {
  position: absolute;
  top: 40px;
  left: 1055px;
  width: 407px;
  padding: 1px;
  border: 1px solid #94989a;
  background: #eeeff2;
  box-shadow: 2px 4px 10px rgba(0, 0, 0, .35);
}

.caption {
  display: flex;
  align-items: center;
  justify-content: center;
  height: 31px;
  background: #dadfdf;
  color: #222;
}

.caption button {
  position: absolute;
  right: 11px;
  line-height: 0;
}

.inner {
  padding: 15px 10px 15px;
}

.tab {
  width: 60px;
  height: 26px;
  margin-bottom: -1px;
  position: relative;
  border: 1px solid #c2c5c8;
  border-bottom: 0;
  border-radius: 2px 2px 0 0;
  background: #fbfbfc;
  line-height: 26px;
  text-align: center;
}

.sheet {
  border: 1px solid #c2c5c8;
  background: #fbfbfc;
}

.part {
  padding: 0 10px;
  border-bottom: 1px solid #c2c5c8;
}

.part:last-child {
  border-bottom: 0;
}

.line {
  display: flex;
  align-items: center;
}

.dialog label {
  display: flex;
  align-items: center;
}

.dialog input[type="text"] {
  flex: 1;
  min-width: 0;
  height: 23px;
  padding: 0 4px;
  border: 1px solid #cdd0d3;
  background: #fff;
}

.dialog input[type="radio"] {
  appearance: none;
  width: 12px;
  height: 12px;
  margin: 0 7px 0 2px;
  border: 1px solid #555;
  border-radius: 50%;
  background: #fff;
}

.dialog input[type="radio"]:checked {
  background: radial-gradient(#333 0 3px, #fff 4px);
}

.dialog input[type="checkbox"] {
  appearance: none;
  width: 12px;
  height: 12px;
  margin: 0 7px 0 0;
  border: 1px solid #555;
  background: #fff;
}

.dialog input[type="checkbox"]::after {
  content: "";
  display: block;
  width: 4px;
  height: 7px;
  margin-left: 3px;
  border: solid #333;
  border-width: 0 2px 2px 0;
  transform: rotate(40deg);
}

.geometry {
  height: 69px;
  padding-top: 14px;
}

.geometry .line {
  margin-top: 4px;
}

.dialog input.quilt {
  margin-left: 7px;
  background: #faf8fe;
}

.csys {
  height: 70px;
  padding-top: 10px;
}

.lead {
  width: 85px;
}

.dialog #csys {
  padding-left: 17px;
  border-color: #a9acae;
  background: #e8fbdc;
  box-shadow: inset 0 0 0 1px #fff;
}

.default {
  margin: 8px 0 0 87px;
}

.rest {
  padding-top: 16px;
  padding-bottom: 10px;
}

.material {
  justify-content: space-between;
  padding: 0 7px;
  margin-bottom: 6px;
}

.material button, .actions button {
  height: 25px;
  border: 1px solid #a9acae;
  background: #f9f9fa;
}

.material button {
  width: 68px;
}

.accuracy {
  margin-top: 16px;
}

.accuracy label {
  width: 60px;
}

.select {
  position: relative;
  flex: 1;
  display: flex;
}

.select select {
  appearance: none;
  flex: 1;
  height: 25px;
  padding: 0 3px;
  border: 1px solid #a9acae;
  border-radius: 0;
  background: linear-gradient(#a9acae, #a9acae) right 14px top / 1px 100% no-repeat #fff;
}

.select .caret {
  position: absolute;
  top: 11px;
  right: 4px;
}

.modes {
  margin: 20px 0 3px;
}

.modes label {
  width: 181px;
}

.output {
  display: grid;
  grid-template-columns: 1fr 15px;
  grid-template-rows: 63px 15px;
  width: 337px;
  height: 82px;
  padding: 1px;
  border: 1px solid #a9acae;
}

.output textarea {
  width: 100%;
  height: 63px;
  padding: 2px 0 0 2px;
  border: 0;
  outline: 0;
  resize: none;
  overflow: hidden;
  background: #f3f3f4;
  line-height: 17px;
}

.vert {
  flex-direction: column;
}

.vert b {
  height: 23px;
}

.vert .down {
  margin-top: auto;
}

.horz b {
  flex: 0 0 206px;
}

.horz .right {
  margin-left: auto;
}

.info {
  align-self: flex-end;
  width: 14px;
  height: 16px;
  margin: 0 0 4px 5px;
  background: #40568f;
}

.dialog .info {
  color: #fff;
  font-family: "Liberation Serif", serif;
  font-size: 15px;
  font-weight: bold;
}

.save {
  gap: 5px;
  margin-top: 10px;
}

.kind {
  flex: 0 0 55px;
}

.kind select {
  padding-left: 7px;
  background-color: #f9f9fa;
}

.dialog .save input {
  height: 25px;
}

.save input::placeholder {
  color: #b5b7b9;
}

.actions {
  display: flex;
  gap: 8px;
  padding: 11px 10px 10px;
  border-top: 1px solid #c2c5c8;
}

.actions button {
  width: 44px;
}

.actions button:nth-child(-n+2) {
  width: 60px;
}

.actions .ok {
  margin-left: auto;
}

.actions .preview {
  padding: 2px;
  border-color: #5cc3f2;
  background: #a2dcfb;
}

.preview span {
  display: block;
  border: 1px dotted #722;
  line-height: 17px;
}
```
